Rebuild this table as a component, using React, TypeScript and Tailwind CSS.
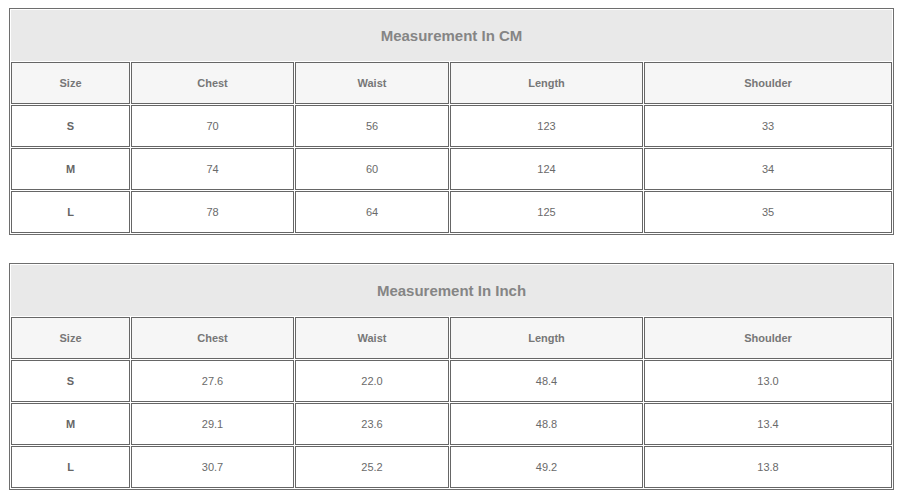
import React from "react";

const cols = ["Size", "Chest", "Waist", "Length", "Shoulder"];

const cm = [
  ["S", "70", "56", "123", "33"],
  ["M", "74", "60", "124", "34"],
  ["L", "78", "64", "125", "35"],
];
const inch = [
  ["S", "27.6", "22.0", "48.4", "13.0"],
  ["M", "29.1", "23.6", "48.8", "13.4"],
  ["L", "30.7", "25.2", "49.2", "13.8"],
];

function SizeTable({ title, rows }: { title: string; rows: string[][] }) {
  return (
    <div className="w-[885px] border border-[#6e6e6e] bg-white p-px">
      <div className="grid grid-cols-[119px_163px_154px_193px_248px] gap-px">
        <div className="col-span-5 h-[51px] pt-[2px] bg-[#e9e9e9] flex items-center justify-center text-[15px] font-bold text-[#858585]">
          {title}
        </div>
        {cols.map((c) => (
          <div
            key={c}
            className="h-[42px] border border-[#666] bg-[#f6f6f6] flex items-center justify-center text-[11px] font-bold text-[#777]"
          >
            {c}
          </div>
        ))}
        {rows.map((r) =>
          r.map((v, i) => (
            <div
              key={r[0] + i}
              className={
                "h-[42px] border border-[#666] bg-white flex items-center justify-center text-[11px] " +
                (i === 0 ? "font-bold text-[#666]" : "text-[#6a6a6a]")
              }
            >
              {v}
            </div>
          ))
        )}
      </div>
    </div>
  );
}

export default function App() {
  return (
    <div
      className="w-[905px] h-[497px] bg-white pl-[9px] pt-[8px] flex flex-col gap-[28px]"
      style={{ fontFamily: '"Liberation Sans", Arial, sans-serif' }}
    >
      <SizeTable title="Measurement In CM" rows={cm} />
      <SizeTable title="Measurement In Inch" rows={inch} />
    </div>
  );
}
